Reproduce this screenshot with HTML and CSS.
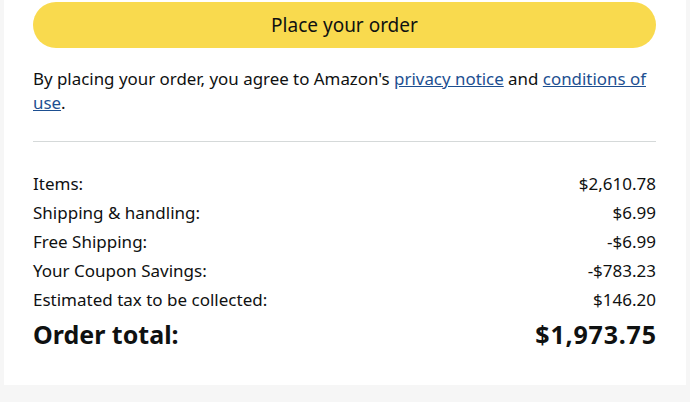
FILE: index.html
```html
<!DOCTYPE html>
<html lang="en">
<head>
<meta charset="utf-8">
<link rel="stylesheet" href="styles.css">
</head>
<body>
<div class="page">
  <div class="card">
    <button class="place-btn">Place your order</button>
    <p class="agree">By placing your order, you agree to Amazon's <a href="#">privacy notice</a> and <a href="#">conditions of</a> <a href="#">use</a>.</p>
    <hr class="divider">
    <div class="summary">
      <div class="row"><span>Items:</span><span>$2,610.78</span></div>
      <div class="row"><span>Shipping &amp; handling:</span><span>$6.99</span></div>
      <div class="row"><span>Free Shipping:</span><span>-$6.99</span></div>
      <div class="row"><span>Your Coupon Savings:</span><span>-$783.23</span></div>
      <div class="row"><span>Estimated tax to be collected:</span><span>$146.20</span></div>
      <div class="row total"><span>Order total:</span><span class="total-value">$1,973.75</span></div>
    </div>
  </div>
</div>
</body>
</html>
```
FILE: styles.css
```css
html, body {
  margin: 0;
  padding: 0;
  background: #f6f6f6;
}
body {
  font-family: "Noto Sans", "Open Sans", sans-serif;
  color: #0f1111;
  width: 690px;
  height: 402px;
  overflow: hidden;
}
.page {
  padding: 0 4px;
}
.card {
  background: #ffffff;
  padding: 2px 30px 0 29px;
  height: 385px;
  box-sizing: border-box;
}
.place-btn {
  display: block;
  width: 100%;
  height: 46px;
  border: none;
  border-radius: 23px;
  background: #f9da4e;
  color: #0f1111;
  font-family: inherit;
  font-size: 19px;
  padding: 0;
  margin: 0;
}
.agree {
  margin: 19px 0 0;
  font-size: 16.9px;
  line-height: 24px;
}
.agree a {
  color: #1d4f91;
  text-decoration: underline;
}
.divider {
  border: none;
  border-top: 1px solid #d5d9d9;
  margin: 26px 0 0;
}
.summary {
  padding-top: 27px;
}
.row {
  display: flex;
  justify-content: space-between;
  font-size: 17px;
  line-height: 29px;
}
.row.total {
  font-size: 25px;
  font-weight: 700;
  line-height: 36px;
  margin-top: 2px;
}
.total-value {
  letter-spacing: 0.8px;
  margin-right: -0.8px;
}
```
